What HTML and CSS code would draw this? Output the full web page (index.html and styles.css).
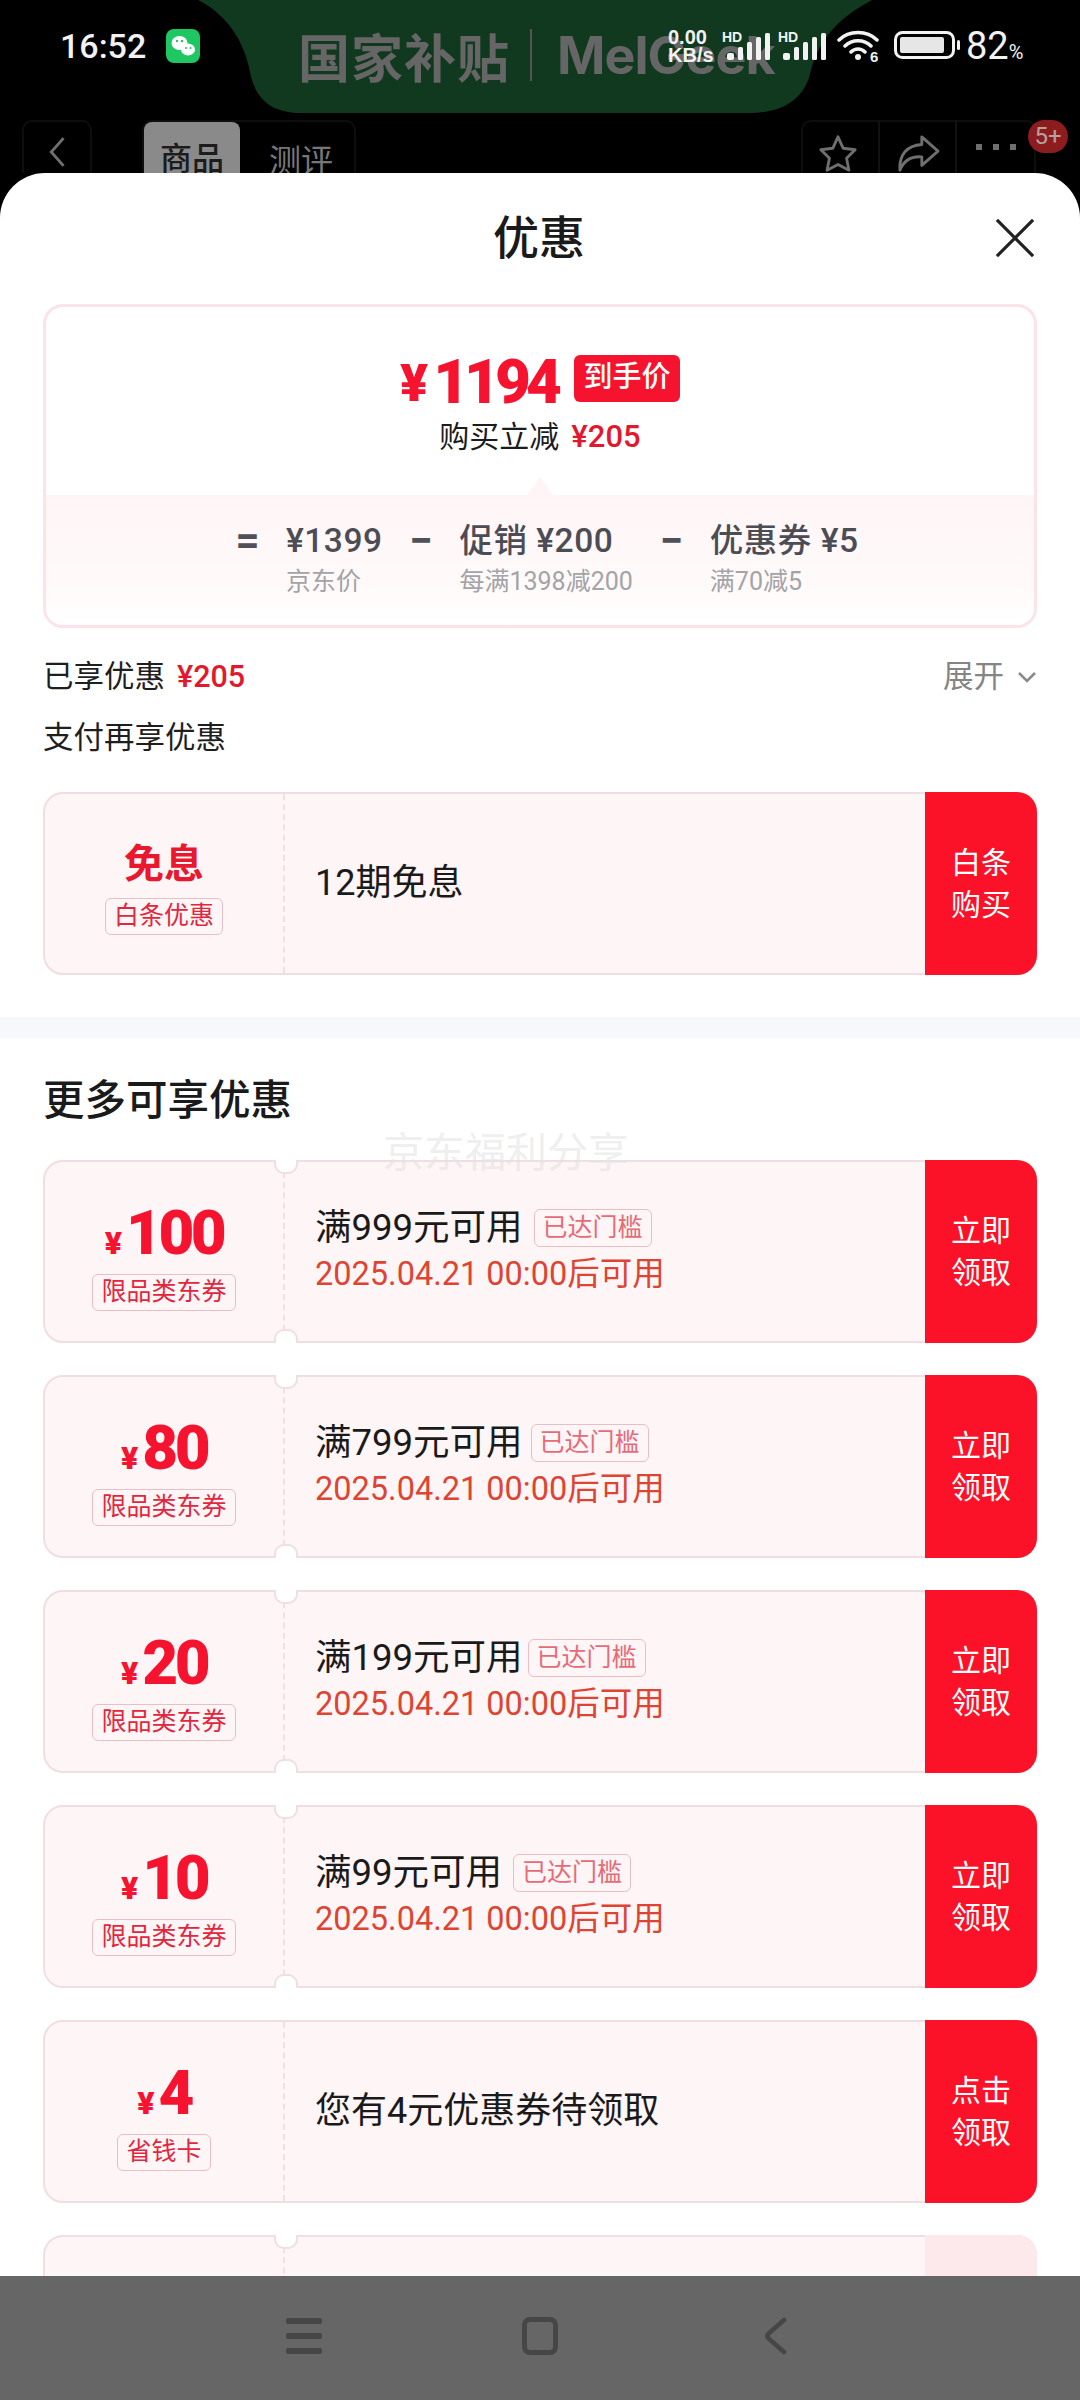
FILE: index.html
```html
<!DOCTYPE html>
<html lang="zh-CN">
<head>
<meta charset="utf-8">
<title>优惠</title>
<link rel="stylesheet" href="styles.css">
</head>
<body>
<div class="screen">
  <svg class="island" viewBox="0 0 680 113" aria-hidden="true"><path d="M0 0C28 14 46 40 52 72C57 98 72 113 104 113H552C586 113 606 98 612 74C620 40 640 18 674 0Z"/></svg>
  <div class="ad"><span class="ad-cn">国家补贴</span><i class="ad-sep"></i><span class="ad-en">MelGeek</span></div>

  <header class="status">
    <div class="status-left">
      <span class="time">16:52</span>
      <svg class="wechat" viewBox="0 0 34 34" aria-hidden="true"><rect width="34" height="34" rx="8" fill="#1fc763"/><ellipse cx="13.500" cy="14" rx="8" ry="7" fill="#fff"/><ellipse cx="22" cy="20.500" rx="7" ry="6" fill="#fff"/><circle cx="11" cy="12" r="1.200" fill="#1fc763"/><circle cx="16" cy="12" r="1.200" fill="#1fc763"/><circle cx="20" cy="19" r="1" fill="#1fc763"/><circle cx="24.500" cy="19" r="1" fill="#1fc763"/></svg>
    </div>
    <div class="status-right">
      <span class="speed">0.00<br>KB/s</span>
      <span class="sig"><b>HD</b><svg viewBox="0 0 43 27" aria-hidden="true"><rect x="0" y="20" width="7" height="7" rx="2"/><rect x="11" y="14" width="5" height="13" rx="1.500"/><rect x="20" y="9" width="5" height="18" rx="1.500"/><rect x="29" y="4" width="5" height="23" rx="1.500"/><rect x="38" y="0" width="5" height="27" rx="1.500"/></svg></span>
      <span class="sig sig-b"><b>HD</b><svg viewBox="0 0 43 27" aria-hidden="true"><rect x="0" y="20" width="7" height="7" rx="2"/><rect x="11" y="14" width="5" height="13" rx="1.500"/><rect x="20" y="9" width="5" height="18" rx="1.500"/><rect x="29" y="4" width="5" height="23" rx="1.500"/><rect x="38" y="0" width="5" height="27" rx="1.500"/></svg></span>
      <svg class="wifi" viewBox="0 0 44 32" aria-hidden="true"><path d="M2 10C12 0 30 0 40 10M8 16C15 9 27 9 34 16M14 22C18 18 24 18 28 22" fill="none" stroke="#f2f2f2" stroke-width="3.500" stroke-linecap="round"/><circle cx="21" cy="27" r="3" fill="#f2f2f2"/><text x="33" y="32" class="wifi-six">6</text></svg>
      <svg class="battery" viewBox="0 0 66 28" aria-hidden="true"><rect x="1.500" y="1.500" width="58" height="25" rx="7" fill="none" stroke="#f2f2f2" stroke-width="3"/><rect x="6" y="6" width="44" height="16" rx="2" fill="#e6e6e6"/><rect x="63" y="9" width="3" height="10" rx="1.500" fill="#f2f2f2"/></svg>
      <span class="pct">82<small>%</small></span>
    </div>
  </header>

  <nav class="topnav">
    <div class="nav-box nav-back"><svg viewBox="0 0 22 40" aria-hidden="true"><path d="M19 3L4 20L19 37" fill="none" stroke="#6f6f6f" stroke-width="3.500"/></svg></div>
    <div class="nav-box nav-tabs"><span class="tab tab-on">商品</span><span class="tab">测评</span></div>
    <div class="nav-box nav-actions">
      <span class="act"><svg viewBox="0 0 42 42" aria-hidden="true"><path d="M21 3L26.500 15L39 16.500L30 25.500L32.500 38L21 32L9.500 38L12 25.500L3 16.500L15.500 15Z" fill="none" stroke="#6f6f6f" stroke-width="3" stroke-linejoin="round"/></svg></span>
      <span class="act"><svg viewBox="0 0 46 42" aria-hidden="true"><path d="M27 3L44 18L27 33V24C15 23 8 28 4 38C3 22 11 12 27 11Z" fill="none" stroke="#6f6f6f" stroke-width="3" stroke-linejoin="round"/></svg></span>
      <span class="act act-dots"><i></i><i></i><i></i></span>
    </div>
    <span class="nav-badge">5+</span>
  </nav>

  <main class="sheet">
    <div class="sheet-title">
      <span></span>
      <h1>优惠</h1>
      <svg class="close" viewBox="0 0 42 42" aria-hidden="true"><path d="M2 2L40 40M40 2L2 40" fill="none" stroke="#222" stroke-width="3.400"/></svg>
    </div>

    <section class="summary">
      <div class="price-card">
        <div class="price-top">
          <div class="price-row"><span class="yen-big">¥</span><span class="price-num">1194</span><span class="price-tag">到手价</span></div>
          <div class="saving">购买立减<b>¥205</b></div>
        </div>
        <div class="price-bottom">
          <span class="op">=</span>
          <div class="term"><strong>¥1399</strong><small>京东价</small></div>
          <span class="op">−</span>
          <div class="term"><strong>促销 ¥200</strong><small>每满1398减200</small></div>
          <span class="op">−</span>
          <div class="term"><strong>优惠券 ¥5</strong><small>满70减5</small></div>
        </div>
      </div>
      <div class="lines">
        <div class="line"><span>已享优惠<b class="line-red">¥205</b></span><span class="expand">展开<svg viewBox="0 0 20 12" aria-hidden="true"><path d="M2 2L10 10L18 2" fill="none" stroke="#8a8a8a" stroke-width="2.500"/></svg></span></div>
        <div class="line">支付再享优惠</div>
      </div>

      <article class="coupon coupon-plain">
        <div class="c-left"><div class="c-word">免息</div><span class="c-tag">白条优惠</span></div>
        <div class="c-body"><div class="c-plain">12期免息</div></div>
        <div class="c-btn">白条<br>购买</div>
      </article>
    </section>

    <div class="strip"></div>

    <section class="more">
      <h2>更多可享优惠</h2>
      <div class="coupons">
        <article class="coupon">
          <div class="c-left"><div class="c-amt"><i>¥</i>100</div><span class="c-tag">限品类东券</span></div>
          <div class="c-body"><div class="c-cond">满999元可用<span class="c-met">已达门槛</span></div><div class="c-date">2025.04.21 00:00后可用</div></div>
          <div class="c-btn">立即<br>领取</div>
        </article>
        <article class="coupon">
          <div class="c-left"><div class="c-amt"><i>¥</i>80</div><span class="c-tag">限品类东券</span></div>
          <div class="c-body"><div class="c-cond">满799元可用<span class="c-met c-met-mid">已达门槛</span></div><div class="c-date">2025.04.21 00:00后可用</div></div>
          <div class="c-btn">立即<br>领取</div>
        </article>
        <article class="coupon">
          <div class="c-left"><div class="c-amt"><i>¥</i>20</div><span class="c-tag">限品类东券</span></div>
          <div class="c-body"><div class="c-cond">满199元可用<span class="c-met c-met-near">已达门槛</span></div><div class="c-date">2025.04.21 00:00后可用</div></div>
          <div class="c-btn">立即<br>领取</div>
        </article>
        <article class="coupon">
          <div class="c-left"><div class="c-amt"><i>¥</i>10</div><span class="c-tag">限品类东券</span></div>
          <div class="c-body"><div class="c-cond">满99元可用<span class="c-met">已达门槛</span></div><div class="c-date">2025.04.21 00:00后可用</div></div>
          <div class="c-btn">立即<br>领取</div>
        </article>
        <article class="coupon coupon-plain">
          <div class="c-left"><div class="c-amt"><i>¥</i>4</div><span class="c-tag">省钱卡</span></div>
          <div class="c-body"><div class="c-plain">您有4元优惠券待领取</div></div>
          <div class="c-btn">点击<br>领取</div>
        </article>
        <article class="coupon">
          <div class="c-left"></div>
          <div class="c-body"></div>
          <div class="c-btn c-btn-faded"></div>
        </article>
      </div>
    </section>

    <div class="watermark">京东福利分享</div>
  </main>

  <footer class="sysnav">
    <span class="sys-menu"><i></i><i></i><i></i></span>
    <span class="sys-home"></span>
    <svg class="sys-back" viewBox="0 0 24 38" aria-hidden="true"><path d="M21 3L5 17Q3.500 19 5 21L21 35" fill="none" stroke="#464646" stroke-width="4.500" stroke-linecap="round"/></svg>
  </footer>
</div>
</body>
</html>
```

FILE: styles.css
```css
* { box-sizing: border-box; }
html, body { margin: 0; padding: 0; }
body {
  width: 1080px;
  height: 2400px;
  overflow: hidden;
  background: #000;
  font-family: "Roboto", "Noto Sans CJK SC", sans-serif;
  color: #1c1c1c;
}
h1, h2 { margin: 0; font-weight: 500; }
i { font-style: normal; }

.screen {
  position: relative;
  width: 1080px;
  height: 2400px;
  display: flex;
  flex-direction: column;
  overflow: hidden;
  background: #000;
}

/* background ad behind the status bar */
.island { position: absolute; left: 198px; top: 0; width: 680px; height: 113px; }
.island path { fill: #10391f; }
.ad {
  position: absolute;
  left: 298px;
  top: 22px;
  display: flex;
  align-items: center;
  height: 66px;
  color: #666;
  font-weight: 700;
}
.ad-cn { font-size: 52px; letter-spacing: 1px; }
.ad-sep { width: 2px; height: 52px; margin: 0 25px 0 20px; background: #555; }
.ad-en { font-family: "Inter", sans-serif; font-size: 52px; letter-spacing: -1px; }

/* status bar */
.status {
  position: relative;
  height: 120px;
  flex: none;
  color: #f2f2f2;
}
.status-left { position: absolute; left: 60px; top: 29px; display: flex; align-items: center; gap: 20px; }
.time { font-size: 34px; font-weight: 500; line-height: 34px; }
.wechat { width: 34px; height: 34px; }
.status-right { position: absolute; left: 668px; top: 26px; width: 372px; height: 40px; display: flex; align-items: flex-start; }
.speed { width: 50px; font-size: 20px; font-weight: 700; line-height: 18px; margin-top: 2px; font-family: "Liberation Sans", sans-serif; }
.sig { position: relative; width: 48px; height: 36px; margin-left: 4px; }
.sig b { position: absolute; left: 0; top: 4px; font-size: 14px; line-height: 14px; font-family: "Liberation Sans", sans-serif; font-weight: 700; }
.sig svg { position: absolute; left: 5px; top: 7px; width: 43px; height: 27px; fill: #f2f2f2; }
.sig-b { margin-left: 8px; }
.wifi { width: 44px; height: 32px; margin: 4px 0 0 11px; }
.wifi-six { font-size: 15px; font-weight: 700; fill: #f2f2f2; font-family: "Liberation Sans", sans-serif; }
.battery { width: 66px; height: 28px; margin: 5px 0 0 13px; }
.pct { margin-left: 6px; font-size: 38px; line-height: 40px; white-space: nowrap; }
.pct small { font-size: 20px; }

/* dimmed product nav */
.topnav {
  position: relative;
  height: 53px;
  flex: none;
  display: flex;
  color: #777;
  overflow: hidden;
}
.nav-box { height: 70px; border: 2px solid #0e0e0e; border-radius: 10px; display: flex; align-items: center; }
.nav-back { width: 70px; margin-left: 22px; justify-content: center; }
.nav-back svg { width: 18px; height: 34px; margin-top: -6px; }
.nav-tabs { width: 214px; margin-left: 50px; }
.tab { width: 98px; height: 70px; display: flex; align-items: flex-start; justify-content: center; padding-top: 21px; font-size: 32px; line-height: 40px; font-weight: 400; }
.tab-on { background: #8a8a8a; color: #1c1c1c; font-weight: 500; border-radius: 8px; margin-top: 4px; padding-top: 17px; }
.tab + .tab { width: 116px; padding-left: 8px; }
.nav-actions { width: 235px; margin-left: 445px; }
.act { width: 78px; height: 70px; display: flex; align-items: flex-start; justify-content: center; padding-top: 14px; border-right: 2px solid #111; }
.act:first-child { padding-right: 6px; }
.act:last-child { border-right: 0; }
.act svg { width: 44px; height: 40px; }
.act-dots { gap: 11px; padding-top: 24px; }
.act-dots i { width: 6px; height: 6px; background: #6f6f6f; }
.nav-badge {
  position: absolute;
  left: 1028px;
  top: 0;
  width: 40px;
  height: 33px;
  border-radius: 17px;
  background: #8c1c1e;
  color: #b9a0a0;
  font-size: 24px;
  line-height: 33px;
  text-align: center;
}

/* bottom sheet */
.sheet {
  position: relative;
  flex: 1 1 0;
  min-height: 0;
  overflow: hidden;
  background: #fff;
  border-radius: 45px 45px 0 0;
}
.sheet-title {
  height: 131px;
  padding: 0 45px 0 43px;
  display: grid;
  grid-template-columns: 1fr auto 1fr;
  align-items: center;
  padding-bottom: 2px;
}
.sheet-title h1 { font-size: 46px; line-height: 60px; color: #1a1a1a; }
.close { justify-self: end; width: 40px; height: 40px; }

.summary { padding: 0 43px; }
.price-card {
  height: 324px;
  border: 3px solid #fbe3e8;
  border-radius: 20px;
  overflow: hidden;
  display: flex;
  flex-direction: column;
}
.price-top { position: relative; height: 188px; flex: none; padding-top: 48px; }
.price-top::after {
  content: "";
  position: absolute;
  left: 481px;
  bottom: 0;
  width: 26px;
  height: 18px;
  background: #fff5f6;
  clip-path: polygon(50% 0, 100% 100%, 0 100%);
}
.price-row { display: flex; align-items: center; justify-content: center; height: 47px; }
.yen-big { font-size: 52px; line-height: 47px; font-weight: 900; color: #f5132f; margin-right: 5px; margin-top: 10px; }
.price-num { font-size: 62px; line-height: 47px; font-weight: 900; letter-spacing: -5px; color: #f5132f; margin-top: 5px; }
.price-tag {
  width: 106px;
  height: 47px;
  margin-left: 17px;
  background: #f5132f;
  border-radius: 6px;
  color: #fff;
  font-size: 29px;
  font-weight: 500;
  line-height: 45px;
  text-align: center;
}
.saving { display: flex; justify-content: center; margin-top: 17px; font-size: 30px; line-height: 36px; }
.saving b { margin-left: 12px; color: #e2182f; font-weight: 500; font-size: 31px; }
.price-bottom {
  flex: 1;
  padding: 26px 0 0 191px;
  display: flex;
  align-items: flex-start;
  gap: 28px;
  background: linear-gradient(#fff5f6, #fffafa 70%, #fff);
}
.op { width: 21px; height: 40px; display: flex; align-items: center; justify-content: center; font-size: 42px; line-height: 40px; font-weight: 700; color: #50505a; }
.term { display: flex; flex-direction: column; }
.term strong { font-size: 33.500px; line-height: 40px; font-weight: 500; letter-spacing: 0.500px; color: #4c4c55; white-space: nowrap; }
.term small { margin-top: 6px; font-size: 25px; line-height: 30px; color: #a3a3a8; white-space: nowrap; }

.lines { margin-top: 15px; }
.line { height: 61px; display: flex; align-items: center; justify-content: space-between; font-size: 30.500px; color: #1f1f1f; }
.line-red { margin-left: 12px; color: #e2182f; font-weight: 500; }
.expand { display: flex; align-items: center; color: #858585; }
.expand svg { width: 20px; height: 12px; margin: 6px 0 0 13px; }

.strip { height: 21px; margin-top: 42px; background: #f6f8fb; }
.more { padding: 33px 43px 0; }
.more h2 { font-size: 41.500px; line-height: 60px; margin-bottom: 29px; color: #1a1a1a; }
.coupons { display: flex; flex-direction: column; gap: 32px; }

/* coupon */
.coupon {
  position: relative;
  flex: none;
  display: flex;
  width: 994px;
  height: 183px;
  background: #fdf5f6;
  border: 2px solid #f0dfe2;
  border-radius: 20px;
}
.summary .coupon { margin-top: 27px; }
.coupon::before, .coupon::after {
  content: "";
  position: absolute;
  left: 229px;
  width: 20px;
  height: 12px;
  background: #fff;
  border: 2px solid #f0dfe2;
  z-index: 1;
}
.coupon::before { top: -2px; border-top: 0; border-radius: 0 0 10px 10px; }
.coupon::after { bottom: -2px; border-bottom: 0; border-radius: 10px 10px 0 0; }
.coupon-plain::before, .coupon-plain::after { display: none; }
.c-left {
  width: 240px;
  flex: none;
  display: flex;
  flex-direction: column;
  align-items: center;
  justify-content: center;
  border-right: 2px dashed #f3dfe3;
  padding-top: 8px;
}
.c-word { font-size: 40px; line-height: 50px; font-weight: 700; color: #e8182f; }
.c-amt { display: flex; align-items: baseline; height: 66px; font-size: 62px; line-height: 66px; font-weight: 900; letter-spacing: -3.500px; color: #f5132f; }
.c-amt i { font-size: 32px; line-height: 1; font-weight: 900; letter-spacing: 0; margin-right: 4px; }
.c-tag {
  margin-top: 8px;
  height: 37px;
  padding: 0 8px;
  border: 1.500px solid #e8bfc5;
  border-radius: 6px;
  font-size: 25px;
  line-height: 33px;
  color: #e2263e;
  white-space: nowrap;
}
.c-body { flex: 1; min-width: 0; padding-left: 30px; display: flex; flex-direction: column; justify-content: center; }
.c-plain { font-size: 36px; line-height: 44px; color: #1a1a1a; padding-bottom: 2px; }
.c-cond { display: flex; align-items: center; font-size: 36.500px; line-height: 46px; color: #1a1a1a; padding-bottom: 2px; }
.c-met {
  margin-left: 11px;
  height: 38px;
  padding: 0 8px;
  border: 1.500px solid #e8bfc5;
  border-radius: 6px;
  font-size: 25px;
  line-height: 35px;
  color: #e76a76;
}
.c-met-mid { margin-left: 8px; }
.c-met-near { margin-left: 5px; }
.c-date { font-size: 32.500px; line-height: 42px; color: #dd4432; padding-bottom: 4px; }
.c-btn {
  width: 112px;
  flex: none;
  margin: -2px -2px -2px 0;
  background: #fc1228;
  border-radius: 0 20px 20px 0;
  color: #fff;
  font-size: 30px;
  line-height: 42px;
  display: flex;
  align-items: center;
  justify-content: center;
  text-align: center;
}
.c-btn-faded { background: #fde8ec; }

.watermark {
  position: absolute;
  left: 383px;
  top: 958px;
  font-size: 41px;
  line-height: 44px;
  color: rgba(225, 225, 225, 0.55);
  z-index: 2;
  pointer-events: none;
}

/* system nav */
.sysnav {
  height: 124px;
  flex: none;
  background: #666;
  display: flex;
  align-items: center;
  justify-content: center;
  gap: 200px;
  padding: 0 7px 4px 0;
}
.sys-menu { width: 36px; display: flex; flex-direction: column; gap: 9px; }
.sys-menu i { height: 6px; border-radius: 2px; background: #464646; }
.sys-home { width: 36px; height: 38px; border: 5px solid #464646; border-radius: 8px; }
.sys-back { width: 24px; height: 38px; margin-left: 5px; }
```
